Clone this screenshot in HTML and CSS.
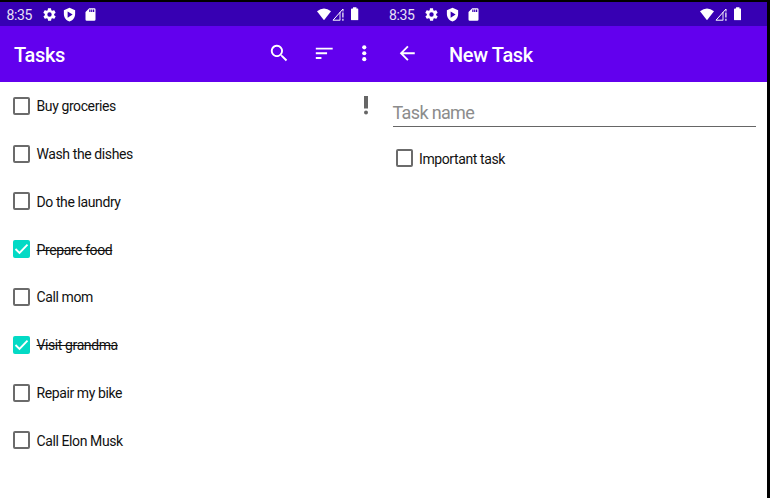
FILE: index.html
```html
<!DOCTYPE html>
<html lang="en">
<head>
<meta charset="utf-8">
<title>Tasks</title>
<link rel="stylesheet" href="styles.css">
</head>
<body>
<svg class="defs" aria-hidden="true">
  <symbol id="gear" viewBox="0 0 24 24"><path d="M19.4 13a7.500 7.500 0 0 0 0-2l2.100-1.600a.5.5 0 0 0 .1-.6l-2-3.500a.5.5 0 0 0-.6-.2l-2.500 1a7.300 7.300 0 0 0-1.700-1L14.500 2.400a.5.5 0 0 0-.5-.4h-4a.5.5 0 0 0-.5.4l-.4 2.700a7.700 7.700 0 0 0-1.700 1l-2.500-1a.5.5 0 0 0-.6.2l-2 3.500a.5.5 0 0 0 .1.600L4.600 11a8 8 0 0 0 0 2l-2.100 1.600a.5.5 0 0 0-.1.600l2 3.500c.1.200.4.300.6.200l2.500-1a7.300 7.300 0 0 0 1.700 1l.4 2.700c0 .2.200.4.5.4h4c.200 0 .4-.2.500-.4l.4-2.700a7.700 7.700 0 0 0 1.700-1l2.500 1c.2.100.5 0 .6-.2l2-3.500a.5.5 0 0 0-.1-.6zM12 15.500a3.500 3.500 0 1 1 0-7 3.500 3.500 0 0 1 0 7z"/></symbol>
  <symbol id="shield" viewBox="0 0 24 24"><path fill-rule="evenodd" d="M12 1 3 5v6c0 5.500 3.800 10.700 9 12 5.200-1.300 9-6.500 9-12V5zM9 7v10l8-5z"/></symbol>
  <symbol id="sd" viewBox="0 0 24 24"><path d="M18 2h-8L4 8v12a2 2 0 0 0 2 2h12a2 2 0 0 0 2-2V4a2 2 0 0 0-2-2zm-6 6h-2V4h2zm3 0h-2V4h2zm3 0h-2V4h2z"/></symbol>
  <symbol id="wifi" viewBox="0 0 14 12"><path d="M0 3Q7-2.600 14 3L7 12z"/></symbol>
  <symbol id="signal" viewBox="0 0 12 13"><path d="M8.300 12.200H1L11 1v2.500" fill="none" stroke="currentColor" stroke-width="1"/><path d="M8 4v8" stroke="currentColor" stroke-width=".9"/><path d="M10.300 4.500h1.200v5h-1.200zM10.300 10.800h1.200v1.900h-1.200z"/></symbol>
  <symbol id="battery" viewBox="0 0 8 14"><path d="M2.200 0h3.600v1.500H7q1 0 1 1V13q0 1-1 1H1q-1 0-1-1V2.500q0-1 1-1h1.200z"/></symbol>
  <symbol id="search" viewBox="0 0 24 24"><path d="M15.500 14h-.79l-.28-.27A6.500 6.500 0 1 0 13.730 14.430l.27.28v.79l5 4.990L20.490 19zm-6 0a4.500 4.500 0 1 1 0-9 4.500 4.500 0 0 1 0 9z"/></symbol>
  <symbol id="sort" viewBox="0 0 24 24"><path d="M3 18h6v-2H3zM3 6v2h18V6zm0 7h12v-2H3z"/></symbol>
  <symbol id="more" viewBox="0 0 24 24"><circle cx="12" cy="5.700" r="2.200"/><circle cx="12" cy="12" r="2.200"/><circle cx="12" cy="18.300" r="2.200"/></symbol>
  <symbol id="back" viewBox="0 0 24 24"><path d="M20 11H7.830l5.590-5.590L12 4l-8 8 8 8 1.410-1.410L7.830 13H20z"/></symbol>
  <symbol id="tick" viewBox="0 0 17 18"><path d="m2.500 9 4 4 8-8.300" fill="none" stroke="currentColor" stroke-width="1.900"/></symbol>
  <symbol id="priority" viewBox="0 0 6 20"><path d="M1 0h4v12.500H1z"/><circle cx="3" cy="16.500" r="2"/></symbol>
</svg>
<div class="screens">
  <section class="screen">
    <div class="status">
      <span class="time">8:35</span>
      <svg class="s-gear"><use href="#gear"/></svg><svg class="s-shield"><use href="#shield"/></svg><svg class="s-sd"><use href="#sd"/></svg>
      <svg class="s-wifi"><use href="#wifi"/></svg><svg class="s-signal"><use href="#signal"/></svg><svg class="s-battery"><use href="#battery"/></svg>
    </div>
    <header class="toolbar">
      <h1 class="title-tasks">Tasks</h1>
      <svg class="icon search"><use href="#search"/></svg><svg class="icon sort"><use href="#sort"/></svg><svg class="icon more"><use href="#more"/></svg>
    </header>
    <ul class="tasks">
      <li><span class="box"></span><span class="label">Buy groceries</span><svg class="priority"><use href="#priority"/></svg></li>
      <li><span class="box"></span><span class="label">Wash the dishes</span></li>
      <li><span class="box"></span><span class="label">Do the laundry</span></li>
      <li class="done"><span class="box"><svg><use href="#tick"/></svg></span><span class="label">Prepare food</span></li>
      <li><span class="box"></span><span class="label">Call mom</span></li>
      <li class="done"><span class="box"><svg><use href="#tick"/></svg></span><span class="label">Visit grandma</span></li>
      <li><span class="box"></span><span class="label">Repair my bike</span></li>
      <li><span class="box"></span><span class="label">Call Elon Musk</span></li>
    </ul>
  </section>
  <section class="screen">
    <div class="status">
      <span class="time">8:35</span>
      <svg class="s-gear"><use href="#gear"/></svg><svg class="s-shield"><use href="#shield"/></svg><svg class="s-sd"><use href="#sd"/></svg>
      <svg class="s-wifi"><use href="#wifi"/></svg><svg class="s-signal"><use href="#signal"/></svg><svg class="s-battery"><use href="#battery"/></svg>
    </div>
    <header class="toolbar">
      <svg class="icon back"><use href="#back"/></svg>
      <h1 class="title-new">New Task</h1>
    </header>
    <div class="form">
      <div class="field">Task name</div>
      <div class="option"><span class="box"></span><span class="label">Important task</span></div>
    </div>
  </section>
</div>
</body>
</html>
```

FILE: styles.css
```css
* { box-sizing: border-box; }
body { margin: 0; font-family: Roboto, sans-serif; color: #111; background: #fff; }
svg { display: block; flex: none; fill: currentColor; }
.defs { display: none; }
.screens {
  display: grid;
  grid-template-columns: 382.5px 1fr;
  height: 498px;
  border-top: 2px solid #000;
  border-right: 3px solid #000;
  overflow: hidden;
}
.status {
  display: flex;
  align-items: center;
  height: 24px;
  padding-left: 6.5px;
  background: #3700b3;
  color: #fff;
}
.time { width: 35px; font-size: 14px; letter-spacing: -.35px; line-height: 24px; padding-top: 1px; color: #e8e2f6; }
.s-gear { width: 15px; height: 15px; }
.s-shield { width: 15px; height: 15px; margin-left: 5.500px; }
.s-sd { width: 15px; height: 15px; margin-left: 6px; }
.s-wifi { width: 14px; height: 12.500px; margin-left: 219.300px; }
.s-signal { width: 12px; height: 13px; margin-left: 1px; }
.s-battery { width: 7.500px; height: 13.500px; margin-left: 7px; }
.toolbar {
  display: flex;
  align-items: center;
  height: 55.500px;
  background: #6200ee;
  color: #fff;
}
h1 { margin: 0; font-size: 20px; font-weight: 500; letter-spacing: -.35px; line-height: 24px; padding-top: 2px; }
.title-tasks { width: 254px; padding-left: 14px; margin-right: 14px; }
.title-new { margin-left: 30.500px; }
.icon { width: 22.500px; height: 22.500px; margin-bottom: 1.500px; }
.sort { margin-left: 22.500px; }
.more { margin-left: 17px; }
.back { margin-left: 13.500px; }
.tasks { margin: 0; padding: .4px 0 0; list-style: none; }
.tasks li {
  display: flex;
  align-items: center;
  height: 47.800px;
  padding: 0 14px 0 13px;
}
.box {
  display: block;
  flex: none;
  width: 17px;
  height: 18px;
  border: 2px solid #6b6b6b;
  border-radius: 2px;
}
.label { margin-left: 6.500px; font-size: 14px; letter-spacing: -.4px; line-height: 18px; padding-top: 1px; }
.done .box { border: 0; background: #03dac5; color: #fff; }
.done .box svg { width: 17px; height: 18px; }
.done .label { text-decoration: line-through; }
.priority { width: 6px; height: 20px; margin-left: auto; color: #666; }
.form { padding-left: 10px; }
.field {
  width: 363px;
  height: 45px;
  padding-top: 20px;
  border-bottom: 1px solid #666;
  color: #8c8c8c;
  font-size: 18px;
  letter-spacing: -.65px;
  line-height: 22px;
}
.option { display: flex; align-items: center; margin-top: 22px; padding-left: 3px; }
```
